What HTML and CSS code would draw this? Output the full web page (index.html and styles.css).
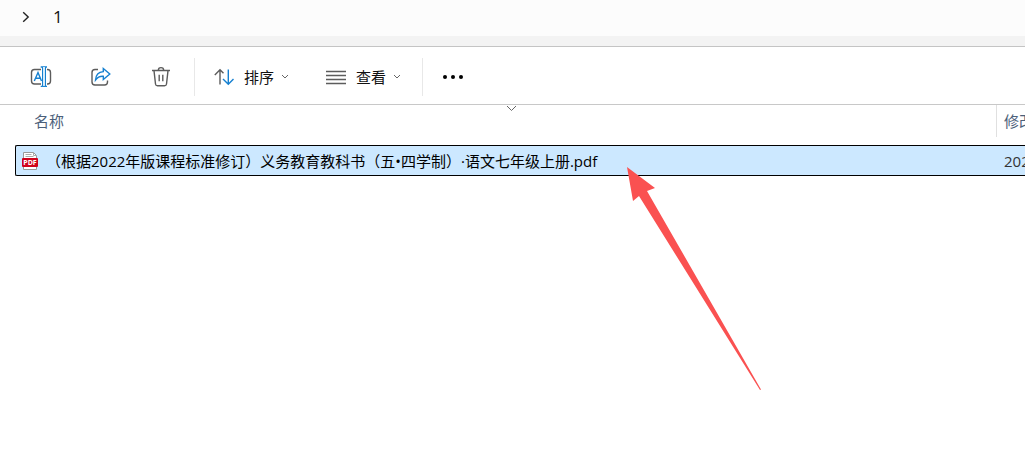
FILE: index.html
```html
<!DOCTYPE html>
<html lang="zh-CN">
  <head>
    <meta charset="UTF-8" />
    <meta name="viewport" content="width=device-width, initial-scale=1.0" />
    <title>1</title>
    <link rel="stylesheet" href="styles.css">
  </head>
  <body>
    <nav class="address-bar">
      <svg class="crumb-arrow" width="8" height="12" viewBox="0 0 8 12">
        <path d="M1.2 1.2 6.2 6 1.2 10.8" />
      </svg>
      <a class="crumb" href="#">1</a>
    </nav>

    <div class="toolbar">
      <div class="tool-group icons">
        <button type="button" class="icon-btn" aria-label="重命名">
          <svg width="22" height="22" viewBox="0 0 22 22">
            <path class="gray" d="M11 3.5H4.5a3 3 0 0 0-3 3v8.500a3 3 0 0 0 3 3H11M17 3.500h.5a3 3 0 0 1 3 3v8.500a3 3 0 0 1-3 3H17" />
            <path class="blue" d="M4.300 15 8 6.500 11.500 15M5.600 12.200h4.700M10.700 1h6.300M10.700 20.400h6.300" />
            <path class="beam" d="M12.500 1v19.400h3V1" />
          </svg>
        </button>
        <button type="button" class="icon-btn" aria-label="共享">
          <svg width="22" height="22" viewBox="0 0 22 22">
            <path class="gray" d="M8 3.500H5a3 3 0 0 0-3 3V16a3 3 0 0 0 3 3h9.500a3 3 0 0 0 3-3v-1.500" />
            <path class="blue" d="M13.300 2.500 19.800 8l-6.500 5.500v-3.200C9.500 10 7.500 11.300 5.500 14c.3-5 3-8 7.800-8.400Z" />
          </svg>
        </button>
        <button type="button" class="icon-btn" aria-label="删除">
          <svg width="22" height="22" viewBox="0 0 22 22">
            <path class="gray" d="M2 4.500h18M8.300 4.300a2.700 2.700 0 0 1 5.400 0M4 4.600 5.500 18a2 2 0 0 0 2 1.800h7a2 2 0 0 0 2-1.800L18 4.600M9.200 8.800v6.500M12.800 8.800v6.500" />
          </svg>
        </button>
      </div>
      <div class="tool-group menus">
        <button type="button" class="menu-btn">
          <svg width="20" height="20" viewBox="0 0 20 20">
            <path class="gray" d="M6 17.500V2.800M.8 8 6 2.700 9.500 6.300" />
            <path class="blue" d="M14.300 2.500v14.700M9 12l5.300 5.300L19.500 12" />
          </svg>
          <span>排序</span>
          <svg class="caret" width="8" height="6" viewBox="0 0 8 6">
            <path d="M1 1l3 3 3-3" />
          </svg>
        </button>
        <button type="button" class="menu-btn">
          <svg width="20" height="20" viewBox="0 0 20 20">
            <path class="gray" d="M0 4.500h20M0 8.500h20M0 12.500h20M0 16.500h20" />
          </svg>
          <span>查看</span>
          <svg class="caret" width="8" height="6" viewBox="0 0 8 6">
            <path d="M1 1l3 3 3-3" />
          </svg>
        </button>
      </div>
      <button type="button" class="more-btn" aria-label="更多">
        <svg width="20" height="4" viewBox="0 0 20 4">
          <circle cx="2" cy="2" r="2" />
          <circle cx="10" cy="2" r="2" />
          <circle cx="18" cy="2" r="2" />
        </svg>
      </button>
    </div>

    <main class="files">
      <table class="file-table">
        <thead>
          <tr>
            <th class="col-name" scope="col">
              名称
              <svg class="sort-mark" width="11" height="7" viewBox="0 0 11 7">
                <path d="M1 1l4.500 4.500L10 1" />
              </svg>
            </th>
            <th class="col-date" scope="col">修改日期</th>
          </tr>
        </thead>
        <tbody>
          <tr class="selected">
            <td>
              <div class="file-name">
                <svg width="16" height="18" viewBox="0 0 16 18">
                  <path d="M1.500.5h10l3 3v14h-13z" fill="#fff" stroke="#999" />
                  <path d="M11.500.5v3h3M3.500 2.500h6M3.500 4.500h8" fill="none" stroke="#aaa" />
                  <rect y="6" width="16" height="9" rx="1" fill="#d0021b" />
                  <text class="pdf-tag" x="8" y="13" text-anchor="middle">PDF</text>
                </svg>
                <span>（根据2022年版课程标准修订）义务教育教科书（五•四学制）·语文七年级上册.pdf</span>
              </div>
            </td>
            <td class="date">2025</td>
          </tr>
        </tbody>
      </table>
      <svg class="pointer" width="136" height="226" viewBox="0 0 136 226">
        <path d="M1 1 29 22 21 25 135 223.500 134 224 13 30 7 35Z" />
      </svg>
    </main>
  </body>
</html>
```

FILE: styles.css
```css
* {
  box-sizing: border-box;
}
body {
  margin: 0;
  min-height: 100vh;
  background-color: #fff;
  color: #111;
  font-family: "Open Sans", "Noto Sans CJK SC", sans-serif;
  font-size: 15px;
  line-height: 20px;
  text-spacing-trim: space-all;
}
button {
  display: flex;
  align-items: center;
  padding: 0;
  border: none;
  background: none;
  color: inherit;
  font: inherit;
  cursor: pointer;
}
svg {
  display: block;
  flex: none;
}
.address-bar {
  display: flex;
  align-items: center;
  gap: 20px;
  height: 47px;
  padding: 0 22px 13px;
  background-color: #fcfcfc;
  border-bottom: 1px solid #c4c4c4;
  box-shadow: inset 0 -10px #f3f3f3;
}
.crumb-arrow path {
  fill: none;
  stroke: #222;
  stroke-width: 1.4;
}
.crumb {
  padding: 0 3px;
  color: #111;
  font-size: 17px;
  text-decoration: none;
}
.toolbar {
  display: flex;
  align-items: center;
  height: 58px;
  padding-top: 2px;
  border-bottom: 1px solid #c8c8c8;
}
.tool-group {
  display: flex;
  align-items: center;
  height: 38px;
  border-right: 1px solid #e8e8e8;
}
.icons {
  gap: 38px;
  padding: 0 22px 0 30px;
}
.menus {
  gap: 37px;
  padding: 0 21px 0 19px;
}
.menu-btn {
  gap: 10px;
}
.menu-btn .caret {
  margin-left: -3px;
}
.more-btn {
  padding: 8px 20px;
}
.gray,
.blue,
.beam {
  fill: none;
  stroke: #5c5c5c;
  stroke-width: 1.4;
}
.blue {
  stroke: #1680d0;
}
.beam {
  fill: #d6ecfa;
  stroke: #1680d0;
  stroke-width: 1;
}
.caret path,
.sort-mark path {
  fill: none;
  stroke: #666;
}
.files {
  position: relative;
  padding-left: 15px;
}
.file-table {
  width: 100%;
  table-layout: fixed;
  border-collapse: separate;
  border-spacing: 0;
}
th {
  height: 32px;
  padding: 0;
  color: #4c607a;
  font-weight: normal;
  text-align: left;
  white-space: nowrap;
  overflow: hidden;
}
.col-name {
  position: relative;
  padding-left: 19px;
  border-right: 1px solid #e0e0e0;
}
.col-date {
  width: 28px;
  padding-left: 7px;
}
.sort-mark {
  position: absolute;
  top: 0;
  left: 50%;
}
tbody::before {
  content: "";
  display: block;
  height: 8px;
}
.selected td {
  height: 31px;
  padding: 0;
  background-color: #cce8ff;
  border-top: 1px solid #000;
  border-bottom: 1px solid #000;
  overflow: hidden;
}
.selected td:first-child {
  border-left: 1px solid #000;
  border-radius: 2px 0 0 2px;
}
.selected .date {
  padding-left: 7px;
  color: #333;
}
.file-name {
  display: flex;
  align-items: center;
  gap: 8px;
  padding-left: 6px;
  color: #000;
  white-space: nowrap;
}
.pdf-tag {
  fill: #fff;
  font-size: 7px;
  font-weight: bold;
}
.pointer {
  position: absolute;
  top: 61px;
  left: 626px;
}
.pointer path {
  fill: #fa5151;
}
```
